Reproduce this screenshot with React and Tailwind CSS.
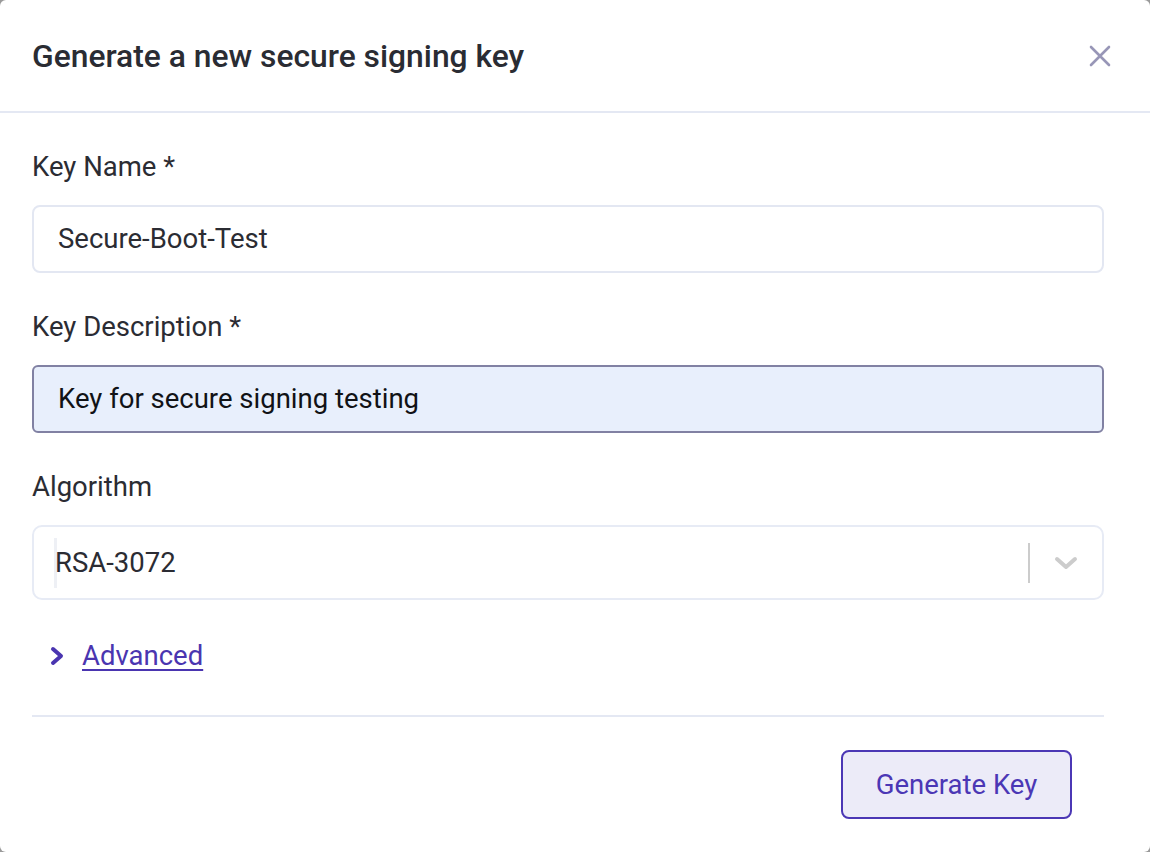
import React from 'react';

const font = { fontFamily: 'Roboto, "Noto Sans", sans-serif' };

const Field = ({ label, children }) => (
  <div className="flex flex-col">
    <label className="text-[27.5px] leading-[32px] text-[#2b2c33]">{label}</label>
    <div className="mt-[22px]">{children}</div>
  </div>
);

export default function App() {
  return (
    <div className="w-[1150px] h-[852px] bg-[#9a9a9a]" style={font}>
      <div className="w-full h-full bg-white rounded-[6px] flex flex-col">
        <div className="h-[113px] flex items-center justify-between pl-[32px] pr-[38px] border-b-2 border-[#e4e8f3]">
          <h2 className="text-[31.8px] font-medium text-[#2a2c33] mt-[2px]">
            Generate a new secure signing key
          </h2>
          <button className="text-[#9896b7]" aria-label="Close">
            <svg width="24" height="24" viewBox="0 0 24 24" fill="none" stroke="currentColor" strokeWidth="2.6" strokeLinecap="round">
              <path d="M3 3L21 21M21 3L3 21" />
            </svg>
          </button>
        </div>

        <div className="pl-[32px] pr-[46px] pt-[38px] flex flex-col">
          <Field label="Key Name *">
            <div className="h-[68px] rounded-[8px] border-2 border-[#e3e7f2] flex items-center pl-[24px] text-[27.5px] text-[#2b2c33]">
              Secure-Boot-Test
            </div>
          </Field>

          <div className="mt-[38px]">
            <Field label="Key Description *">
              <div className="h-[68px] rounded-[6px] border-2 border-[#8181a3] bg-[#e8effc] flex items-center pl-[24px] text-[27.5px] text-[#111216]">
                Key for secure signing testing
              </div>
            </Field>
          </div>

          <div className="mt-[38px]">
            <Field label="Algorithm">
              <div className="h-[75px] rounded-[10px] border-2 border-[#e7ebf5] flex items-center">
                <div className="flex-1 flex items-center pl-[20px] h-full">
                  <span className="w-[3px] h-[50px] bg-[#eef0f5] mr-[-2px]"></span>
                  <span className="text-[27.5px] text-[#2b2c33]">RSA-3072</span>
                </div>
                <span className="w-[2px] h-[40px] bg-[#cccccc]"></span>
                <div className="w-[72px] flex items-center justify-center text-[#cccccc]">
                  <svg width="26" height="18" viewBox="0 0 26 18" fill="none" stroke="currentColor" strokeWidth="4" strokeLinecap="round" strokeLinejoin="round">
                    <path d="M4 5l9 8 9-8" />
                  </svg>
                </div>
              </div>
            </Field>
          </div>

          <div className="mt-[40px] flex items-center h-[32px] pl-[17px]">
            <svg width="16" height="22" viewBox="0 0 16 22" fill="none" stroke="#4a35b0" strokeWidth="4" strokeLinecap="round" strokeLinejoin="round">
              <path d="M4 4l8 7-8 7" />
            </svg>
            <a href="#" className="ml-[17px] text-[27.5px] text-[#4a35b0] underline underline-offset-[4px] decoration-[2px]">
              Advanced
            </a>
          </div>

          <div className="mt-[43px] h-[2px] bg-[#e4e8f3]"></div>

          <div className="flex justify-end pr-[32px] mt-[33px]">
            <button className="w-[231px] h-[69px] rounded-[8px] border-2 border-[#4b37b5] bg-[#ecebf8] text-[27.5px] text-[#4b37b5]">
              Generate Key
            </button>
          </div>
        </div>
      </div>
    </div>
  );
}
